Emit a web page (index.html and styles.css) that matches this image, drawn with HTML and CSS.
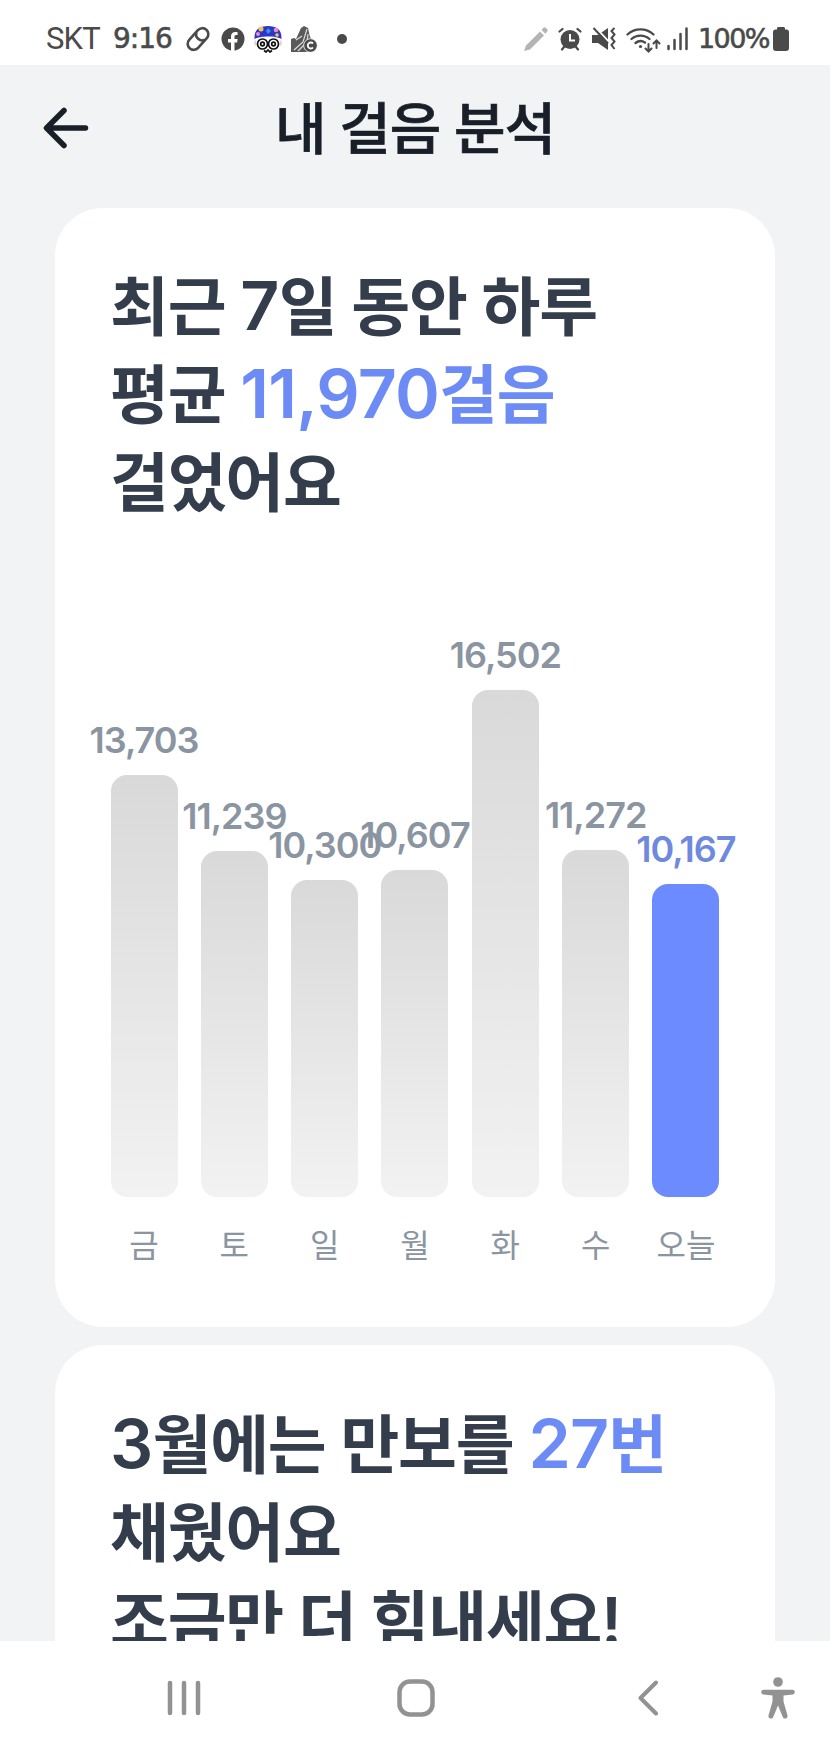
FILE: index.html
```html
<!DOCTYPE html>
<html lang="ko">
<head>
  <meta charset="UTF-8" />
  <meta name="viewport" content="width=device-width, initial-scale=1.0"/>
  <title>내 걸음 분석</title>
  <link rel="stylesheet" href="styles.css">
</head>
<body>

  <!-- Status bar -->
  <div class="status-bar">
    <div class="status-left">
      <span class="carrier">SKT</span>
      <span class="clock">9:16</span>
      <svg class="ic-link" width="24" height="26" viewBox="0 0 24 26" fill="none" stroke="#4a4a4a" stroke-width="2.6">
        <g transform="rotate(42 12 13)">
          <rect x="6" y="0.5" width="12" height="25" rx="6"/>
          <path d="M6.500 9c1.500 5 9.500 5 11 0"/>
        </g>
      </svg>
      <svg class="ic-facebook" width="24" height="24" viewBox="0 0 24 24">
        <circle cx="12" cy="12" r="11.500" fill="#4a4a4a"/>
        <path d="M10 24v-8.500H7v-3.500h3V9.500C10 6.500 11.700 5 14.300 5c1.200 0 2.300.2 2.300.2v2.900h-1.400c-1.300 0-1.700.8-1.700 1.600V12h3.100l-.5 3.500h-2.600V24z" fill="#fff"/>
      </svg>
      <svg class="ic-face" width="28" height="28" viewBox="0 0 28 28">
        <circle cx="3" cy="18" r="3" fill="#f6cfcf"/>
        <circle cx="25" cy="18" r="3" fill="#f6cfcf"/>
        <rect x="2" y="7" width="24" height="19" rx="7" fill="#fff"/>
        <path d="M.5 14C0 4 6 1 14 1s14 3 13.500 13c-5-3.500-22-3.500-27 0z" fill="#2f35c8"/>
        <circle cx="7" cy="4" r="2.500" fill="#f0c65a"/>
        <circle cx="4" cy="9" r="2" fill="#e58fc5"/>
        <circle cx="22" cy="5" r="2.300" fill="#e58fc5"/>
        <circle cx="23" cy="10" r="1.800" fill="#f0c65a"/>
        <path d="M14 3l3 3-3 3-2-3z" fill="#2e9be8"/>
        <g fill="none" stroke="#111" stroke-width="1.700">
          <circle cx="8.500" cy="19" r="5"/>
          <circle cx="19.500" cy="19" r="5"/>
          <circle cx="8.500" cy="19" r="1.800"/>
          <circle cx="19.500" cy="19" r="1.800"/>
          <path d="M10 25.500l2 1.500 2-2 2 2 2-1.500"/>
        </g>
      </svg>
      <svg class="ic-app" width="28" height="28" viewBox="0 0 28 28">
        <path d="M1 27V14l3-1 2 1 5-11 3-2 4 2 2 9 5 6-2 9z" fill="#5a5a5a"/>
        <path d="M4 25l9-8 4-13M8 26l9-9 1-8M6 15l6-4" fill="none" stroke="#ddd" stroke-width="1.200"/>
        <circle cx="20.500" cy="20.500" r="6.800" fill="#4a4a4a" stroke="#fff" stroke-width=".8"/>
        <path d="M23 18.500a3 3 0 1 0 0 4" fill="none" stroke="#fff" stroke-width="1.800"/>
      </svg>
      <span class="more-dot"></span>
    </div>
    <div class="status-right">
      <svg class="ic-pen" width="24" height="24" viewBox="0 0 24 24" fill="#b4b4b4">
        <path d="M0 24l2-5.500L16 4.500l4 4L6 22.500z"/>
        <path d="M17.500 3l2-2.200c.7-.8 1.500-.8 2.200 0l1.500 1.500c.7.700.7 1.500 0 2.200L21.500 6.800z"/>
      </svg>
      <svg class="ic-alarm" width="24" height="24" viewBox="0 0 24 24">
        <circle cx="12" cy="12.500" r="9.500" fill="#4a4a4a"/>
        <path d="M1.500 4.500L4.500 2M22.500 4.500L19.500 2M4 22.500L6 20M20 22.500L18 20" stroke="#4a4a4a" stroke-width="2.200" stroke-linecap="round"/>
        <path d="M12 7v6.500h5" fill="none" stroke="#fff" stroke-width="2"/>
      </svg>
      <svg class="ic-mute" width="24" height="24" viewBox="0 0 24 24">
        <path d="M0 8h6l10-7v22l-10-7H0z" fill="#4a4a4a"/>
        <path d="M3 0l14 15" stroke="#fff" stroke-width="2"/>
        <path d="M1.500 1L16 16.500" stroke="#4a4a4a" stroke-width="2"/>
        <path d="M22.500 1l-3 3 3 3.500-3 3.500 3 3.500-3 3.500 3 4" fill="none" stroke="#4a4a4a" stroke-width="2"/>
      </svg>
      <svg class="ic-wifi" width="35" height="27" viewBox="0 0 35 27" fill="none" stroke="#4a4a4a" stroke-width="2.300" stroke-linecap="round">
        <path d="M1.500 8.500a19 19 0 0 1 26 0M5.500 13a13.500 13.500 0 0 1 18 0M9.500 17a8 8 0 0 1 9.500-.5"/>
        <circle cx="14.500" cy="20.500" r="1.600" fill="#4a4a4a" stroke="none"/>
        <path d="M22.500 18v7M19.500 22.500l3 3 3-3M30.500 22v-7M27.500 17.500l3-3 3 3" stroke-width="2"/>
      </svg>
      <svg class="ic-signal" width="21" height="24" viewBox="0 0 21 24" stroke="#4a4a4a" stroke-width="2.500" stroke-linecap="round">
        <path d="M1.500 19v3M7.500 13v9M13.500 7v15M19.500 1.500v20.500"/>
      </svg>
      <span class="battery-text">100%</span>
      <svg class="ic-battery" width="16" height="24" viewBox="0 0 16 24" fill="#4a4a4a">
        <path d="M4 2.500V1.500C4 .6 4.500 0 5.500 0h5c1 0 1.500.6 1.500 1.500v1h1.500c1.500 0 2.500 1 2.500 2.500v16c0 2-1 3-3 3H3c-2 0-3-1-3-3V5c0-1.500 1-2.500 2.500-2.500z"/>
      </svg>
    </div>
  </div>

  <main class="screen">
    <!-- Page header -->
    <header class="header">
      <svg class="back" width="46" height="42" viewBox="0 0 46 42" fill="none" stroke="#191f28" stroke-width="5.500" stroke-linecap="round" stroke-linejoin="round">
        <path d="M42.500 21H4M21 3.500L3.500 21 21 38.500"/>
      </svg>
      <h1>내 걸음 분석</h1>
    </header>

    <!-- Weekly average -->
    <section class="card week-card">
      <h2>최근 <b>7</b>일 동안 하루<br>평균 <em><b>11,970</b>걸음</em><br>걸었어요</h2>

      <div class="chart">
        <div class="col"><span class="value">13,703</span><div class="bar" style="height: 422px"></div><span class="day">금</span></div>
        <div class="col"><span class="value">11,239</span><div class="bar" style="height: 346px"></div><span class="day">토</span></div>
        <div class="col"><span class="value">10,300</span><div class="bar" style="height: 317px"></div><span class="day">일</span></div>
        <div class="col"><span class="value">10,607</span><div class="bar" style="height: 327px"></div><span class="day">월</span></div>
        <div class="col"><span class="value">16,502</span><div class="bar" style="height: 507px"></div><span class="day">화</span></div>
        <div class="col"><span class="value">11,272</span><div class="bar" style="height: 347px"></div><span class="day">수</span></div>
        <div class="col today"><span class="value">10,167</span><div class="bar" style="height: 313px"></div><span class="day">오늘</span></div>
      </div>
    </section>

    <!-- Monthly goal -->
    <section class="card month-card">
      <h2><b>3</b>월에는 만보를 <em><b>27</b>번</em><br>채웠어요<br>조금만 더 힘내세요!</h2>
    </section>
  </main>

  <!-- Navigation bar -->
  <nav class="nav-bar">
    <svg class="nav-recent" width="34" height="36" viewBox="0 0 34 36" stroke="#929292" stroke-width="4.500" stroke-linecap="round">
      <path d="M3 3v30M17 3v30M31 3v30"/>
    </svg>
    <svg class="nav-home" width="38" height="38" viewBox="0 0 38 38" fill="none" stroke="#929292" stroke-width="4.500">
      <rect x="2.500" y="2.500" width="33" height="33" rx="10.500"/>
    </svg>
    <svg class="nav-back" width="22" height="36" viewBox="0 0 22 36" fill="none" stroke="#929292" stroke-width="4" stroke-linecap="round" stroke-linejoin="round">
      <path d="M19 2.500L3.500 18 19 33.500"/>
    </svg>
    <svg class="nav-access" width="34" height="42" viewBox="0 0 34 42" fill="#929292">
      <circle cx="17" cy="5" r="4.800"/>
      <path d="M2.500 12.800h29c3 0 3 4.500 0 4.800l-9 1v6l4 14c.6 3-3.500 4.200-4.700 1.500L17 28.500l-4.800 11.600c-1.200 2.700-5.300 1.500-4.700-1.500l4-14v-6l-9-1c-3-.3-3-4.800 0-4.800z"/>
    </svg>
  </nav>

</body>
</html>
```
FILE: styles.css
```css
* {
  box-sizing: border-box;
}

body {
  margin: 0;
  height: 1752px;
  display: flex;
  flex-direction: column;
  overflow: hidden;
  background-color: #fff;
  font-family: Inter, 'Noto Sans CJK KR', sans-serif;
}

svg {
  display: block;
  flex: none;
}

/* Status bar */
.status-bar {
  flex: none;
  height: 65px;
  padding: 14px 41px 0 46px;
  display: flex;
  justify-content: space-between;
  color: #4a4a4a;
}

.status-left,
.status-right {
  display: flex;
  align-items: center;
  height: 50px;
}

.carrier {
  font: 31px/50px Roboto, sans-serif;
  letter-spacing: -0.8px;
}

.clock {
  margin-left: 13px;
  width: 59px;
  font: 28px/50px 'DejaVu Sans', sans-serif;
  letter-spacing: -1px;
  -webkit-text-stroke: 0.6px #4a4a4a;
}

.ic-link {
  margin-left: 14px;
}

.ic-facebook {
  margin-left: 11px;
}

.ic-face {
  margin-left: 9px;
}

.ic-app {
  margin-left: 8px;
}

.more-dot {
  width: 10px;
  height: 10px;
  margin-left: 19px;
  border-radius: 50%;
  background-color: #4a4a4a;
}

.ic-alarm,
.ic-mute {
  margin-left: 10px;
}

.ic-wifi {
  margin-left: 10px;
}

.ic-signal {
  margin-left: 6px;
}

.battery-text {
  margin-left: 10px;
  width: 71px;
  font: 27px/50px 'DejaVu Sans', sans-serif;
  letter-spacing: -1.6px;
  -webkit-text-stroke: 0.6px #4a4a4a;
}

.ic-battery {
  margin-left: 4px;
}

/* Screen */
.screen {
  flex: none;
  height: 1576px;
  padding: 0 55px;
  overflow: hidden;
  background-color: #f2f3f5;
}

.header {
  height: 143px;
  margin: 0 -55px;
  padding: 0 43px;
  display: grid;
  grid-template-columns: 46px 1fr 46px;
  align-items: center;
}

.back {
  margin-top: -18px;
}

.header h1 {
  margin: -25px 0 0;
  text-align: center;
  font-size: 56px;
  font-weight: 500;
  letter-spacing: -1.1px;
  color: #191f28;
  -webkit-text-stroke: 0.7px #191f28;
}

.card {
  background-color: #fff;
  border-radius: 48px;
  padding: 55px 55px 0;
}

.week-card {
  height: 1119px;
  display: flex;
  flex-direction: column;
}

.month-card {
  height: 500px;
  margin-top: 18px;
  padding-top: 56px;
}

.card h2 {
  margin: 0;
  font-size: 64px;
  font-weight: 600;
  line-height: 88px;
  letter-spacing: -1.2px;
  white-space: nowrap;
  color: #333d4b;
}

.card h2 b {
  font-size: 68px;
  font-weight: 600;
  line-height: 1;
  letter-spacing: -0.8px;
}

.card h2 em {
  font-style: normal;
  color: #6d8bf5;
}

/* Bar chart */
.chart {
  height: 734px;
  display: flex;
  justify-content: space-between;
  align-items: flex-end;
}

.col {
  width: 68px;
  display: flex;
  flex-direction: column;
  align-items: center;
}

.value {
  margin-bottom: 13px;
  font-size: 36px;
  font-weight: 600;
  line-height: 44px;
  letter-spacing: -1px;
  color: #8b95a1;
}

.bar {
  width: 67px;
  border-radius: 16px;
  background: linear-gradient(#d9d9d9, #f2f2f2);
}

.day {
  height: 64px;
  padding-top: 26px;
  font-size: 32px;
  line-height: 46px;
  white-space: nowrap;
  color: #8b95a1;
}

.today .bar {
  background: #6b8bff;
}

.today .value {
  color: #6f89df;
}

/* Navigation bar */
.nav-bar {
  flex: 1;
  display: flex;
  align-items: center;
  padding: 3px 34px 0 167px;
}

.nav-home {
  margin-left: 196px;
}

.nav-back {
  margin-left: 202px;
}

.nav-access {
  margin-left: 102px;
}
```
